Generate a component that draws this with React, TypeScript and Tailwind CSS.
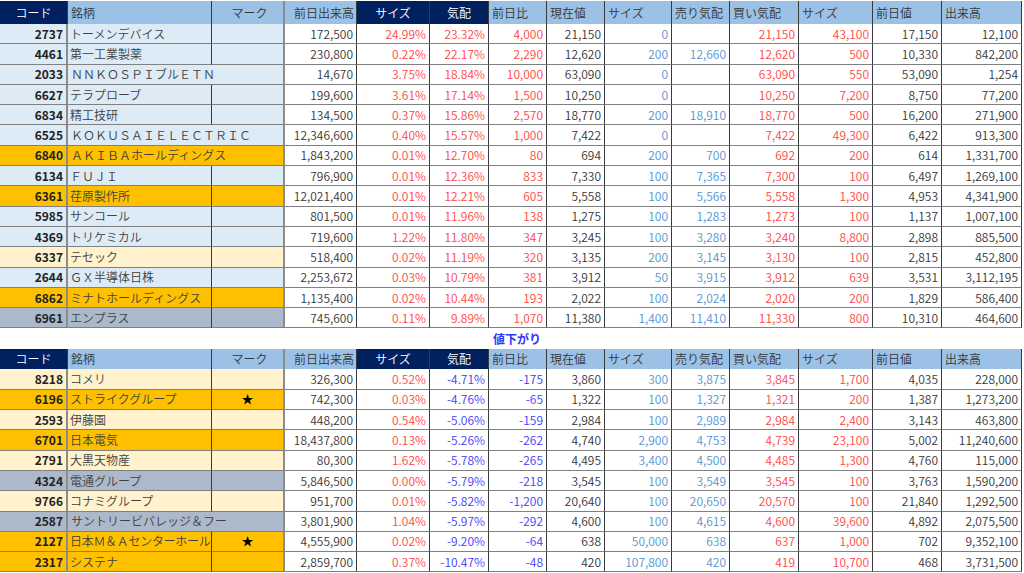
import React from "react";

type Bg = "blue" | "orange" | "cream" | "slate";

type Row = {
  code: string;
  name: string;
  bg: Bg;
  mark?: string;
  wide?: boolean;
  tight?: boolean;
  vals: string[];
};

const bgClass: Record<Bg, string> = {
  blue: "bg-[#ddebf7]",
  orange: "bg-[#ffc000]",
  cream: "bg-[#fff2cc]",
  slate: "bg-[#acb9ca]",
};

const gridCols =
  "grid grid-cols-[68px_144px_73px_72px_73px_59px_58px_58px_67px_58px_69px_74px_69px_80px]";

const DARK = "text-[#363636]";
const RED = "text-[#ff4545]";
const BLUE = "text-[#3c3cff]";
const SKY = "text-[#5294d2]";

const upColors = [DARK, RED, RED, RED, DARK, SKY, SKY, RED, RED, DARK, DARK];
const downColors = [DARK, RED, BLUE, BLUE, DARK, SKY, SKY, RED, RED, DARK, DARK];

const gainers: Row[] = [
  { code: "2737", name: "トーメンデバイス", bg: "blue", vals: ["172,500", "24.99%", "23.32%", "4,000", "21,150", "0", "", "21,150", "43,100", "17,150", "12,100"] },
  { code: "4461", name: "第一工業製薬", bg: "blue", vals: ["230,800", "0.22%", "22.17%", "2,290", "12,620", "200", "12,660", "12,620", "500", "10,330", "842,200"] },
  { code: "2033", name: "ＮＮＫＯＳＰＩブルＥＴＮ", bg: "blue", wide: true, vals: ["14,670", "3.75%", "18.84%", "10,000", "63,090", "0", "", "63,090", "550", "53,090", "1,254"] },
  { code: "6627", name: "テラプローブ", bg: "blue", vals: ["199,600", "3.61%", "17.14%", "1,500", "10,250", "0", "", "10,250", "7,200", "8,750", "77,200"] },
  { code: "6834", name: "精工技研", bg: "blue", vals: ["134,500", "0.37%", "15.86%", "2,570", "18,770", "200", "18,910", "18,770", "500", "16,200", "271,900"] },
  { code: "6525", name: "ＫＯＫＵＳＡＩＥＬＥＣＴＲＩＣ", bg: "blue", wide: true, vals: ["12,346,600", "0.40%", "15.57%", "1,000", "7,422", "0", "", "7,422", "49,300", "6,422", "913,300"] },
  { code: "6840", name: "ＡＫＩＢＡホールディングス", bg: "orange", wide: true, vals: ["1,843,200", "0.01%", "12.70%", "80", "694", "200", "700", "692", "200", "614", "1,331,700"] },
  { code: "6134", name: "ＦＵＪＩ", bg: "blue", vals: ["796,900", "0.01%", "12.36%", "833", "7,330", "100", "7,365", "7,300", "100", "6,497", "1,269,100"] },
  { code: "6361", name: "荏原製作所", bg: "orange", vals: ["12,021,400", "0.01%", "12.21%", "605", "5,558", "100", "5,566", "5,558", "1,300", "4,953", "4,341,900"] },
  { code: "5985", name: "サンコール", bg: "blue", vals: ["801,500", "0.01%", "11.96%", "138", "1,275", "100", "1,283", "1,273", "100", "1,137", "1,007,100"] },
  { code: "4369", name: "トリケミカル", bg: "blue", vals: ["719,600", "1.22%", "11.80%", "347", "3,245", "100", "3,280", "3,240", "8,800", "2,898", "885,500"] },
  { code: "6337", name: "テセック", bg: "cream", vals: ["518,400", "0.02%", "11.19%", "320", "3,135", "200", "3,145", "3,130", "100", "2,815", "452,800"] },
  { code: "2644", name: "ＧＸ半導体日株", bg: "blue", vals: ["2,253,672", "0.03%", "10.79%", "381", "3,912", "50", "3,915", "3,912", "639", "3,531", "3,112,195"] },
  { code: "6862", name: "ミナトホールディングス", bg: "orange", vals: ["1,135,400", "0.02%", "10.44%", "193", "2,022", "100", "2,024", "2,020", "200", "1,829", "586,400"] },
  { code: "6961", name: "エンプラス", bg: "slate", vals: ["745,600", "0.11%", "9.89%", "1,070", "11,380", "1,400", "11,410", "11,330", "800", "10,310", "464,600"] },
];

const losers: Row[] = [
  { code: "8218", name: "コメリ", bg: "cream", vals: ["326,300", "0.52%", "-4.71%", "-175", "3,860", "300", "3,875", "3,845", "1,700", "4,035", "228,000"] },
  { code: "6196", name: "ストライクグループ", bg: "orange", mark: "★", vals: ["742,300", "0.03%", "-4.76%", "-65", "1,322", "100", "1,327", "1,321", "200", "1,387", "1,273,200"] },
  { code: "2593", name: "伊藤園", bg: "cream", vals: ["448,200", "0.54%", "-5.06%", "-159", "2,984", "100", "2,989", "2,984", "2,400", "3,143", "463,800"] },
  { code: "6701", name: "日本電気", bg: "orange", vals: ["18,437,800", "0.13%", "-5.26%", "-262", "4,740", "2,900", "4,753", "4,739", "23,100", "5,002", "11,240,600"] },
  { code: "2791", name: "大黒天物産", bg: "cream", vals: ["80,300", "1.62%", "-5.78%", "-265", "4,495", "3,400", "4,500", "4,485", "1,300", "4,760", "115,000"] },
  { code: "4324", name: "電通グループ", bg: "slate", vals: ["5,846,500", "0.00%", "-5.79%", "-218", "3,545", "100", "3,549", "3,545", "100", "3,763", "1,590,200"] },
  { code: "9766", name: "コナミグループ", bg: "cream", vals: ["951,700", "0.01%", "-5.82%", "-1,200", "20,640", "100", "20,650", "20,570", "100", "21,840", "1,292,500"] },
  { code: "2587", name: "サントリービバレッジ＆フー", bg: "slate", wide: true, vals: ["3,801,900", "1.04%", "-5.97%", "-292", "4,600", "100", "4,615", "4,600", "39,600", "4,892", "2,075,500"] },
  { code: "2127", name: "日本Ｍ＆Ａセンターホール", bg: "orange", mark: "★", tight: true, vals: ["4,555,900", "0.02%", "-9.20%", "-64", "638", "50,000", "638", "637", "1,000", "702", "9,352,100"] },
  { code: "2317", name: "システナ", bg: "orange", vals: ["2,859,700", "0.37%", "-10.47%", "-48", "420", "107,800", "420", "419", "10,700", "468", "3,731,500"] },
];

const NAVY = "bg-[#002060] text-white justify-center";
const LIGHT = "bg-[#9bc2e6] text-[#363636]";

const headers: { label: string; cls: string }[] = [
  { label: "コード", cls: `${NAVY}` },
  { label: "銘柄", cls: `${LIGHT} justify-start pl-[3px]` },
  { label: "マーク", cls: `${LIGHT} justify-center pl-1 border-r-2 border-r-[#8c8c8c]` },
  { label: "前日出来高", cls: `${LIGHT} justify-end pr-[2px]` },
  { label: "サイズ", cls: `${NAVY}` },
  { label: "気配", cls: `${NAVY}` },
  { label: "前日比", cls: `${LIGHT} justify-start pl-[3px]` },
  { label: "現在値", cls: `${LIGHT} justify-start pl-[3px]` },
  { label: "サイズ", cls: `${LIGHT} justify-start pl-[3px]` },
  { label: "売り気配", cls: `${LIGHT} justify-start pl-[3px]` },
  { label: "買い気配", cls: `${LIGHT} justify-start pl-[3px]` },
  { label: "サイズ", cls: `${LIGHT} justify-start pl-[3px]` },
  { label: "前日値", cls: `${LIGHT} justify-start pl-[3px]` },
  { label: "出来高", cls: `${LIGHT} justify-start pl-[3px]` },
];

const cell = "flex items-center overflow-hidden whitespace-nowrap border-b border-r border-b-[#808080] border-r-[#3a3a3a]";

function HeaderRow({ height }: { height: string }) {
  return (
    <div className={`${gridCols} ${height}`}>
      {headers.map((h, i) => (
        <div key={i} className={`flex items-center overflow-hidden whitespace-nowrap border-r border-r-[#3a3a3a] ${h.cls}`}>
          {h.label}
        </div>
      ))}
    </div>
  );
}

function DataRow({ row, colors }: { row: Row; colors: string[] }) {
  const bg = bgClass[row.bg];
  return (
    <div className={`${gridCols} h-[20.3px]`}>
      <div className={`${cell} ${bg} justify-end pr-[3px] font-bold text-[#222] border-r-2 border-r-[#8c8c8c]`}>{row.code}</div>
      {row.wide ? (
        <div className={`${cell} ${bg} col-span-2 pl-[3px] text-[#404040] border-r-2 border-r-[#8c8c8c]`}>{row.name}</div>
      ) : (
        <>
          <div className={`${cell} ${bg} pl-[2px] text-[#404040] ${row.tight ? "tracking-[-0.3px]" : ""}`}>{row.name}</div>
          <div className={`${cell} ${bg} justify-center text-black border-r-2 border-r-[#8c8c8c]`}>{row.mark ?? ""}</div>
        </>
      )}
      {row.vals.map((v, i) => (
        <div key={i} className={`${cell} bg-white justify-end pr-[3px] ${colors[i]}`}>
          {v}
        </div>
      ))}
    </div>
  );
}

export default function App() {
  return (
    <div
      className="h-[573px] w-[1024px] overflow-hidden bg-white pt-px text-[12px] leading-none font-[350]"
      style={{ fontFamily: '"Noto Sans CJK JP", "Noto Sans", sans-serif' }}
    >
      <div className="w-[1022px]">
        <HeaderRow height="h-[23px]" />
        {gainers.map((r) => (
          <DataRow key={r.code} row={r} colors={upColors} />
        ))}
        <div className={`${gridCols} h-[21px]`}>
          <div className="col-start-7 col-span-2 flex items-center pl-[4px] font-bold text-[#3333ff]">値下がり</div>
        </div>
        <HeaderRow height="h-[20px]" />
        {losers.map((r) => (
          <DataRow key={r.code} row={r} colors={downColors} />
        ))}
      </div>
    </div>
  );
}
